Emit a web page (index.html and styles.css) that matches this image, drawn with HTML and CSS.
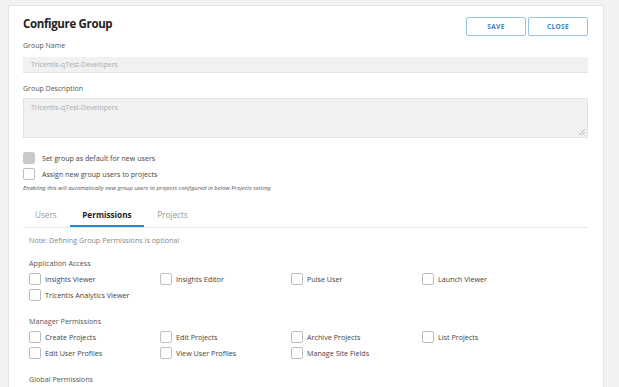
FILE: index.html
```html
<!DOCTYPE html>
<html>
<head>
<meta charset="utf-8">
<link rel="stylesheet" href="styles.css">
</head>
<body>
<div class="panel">
  <div class="header">
    <h1 class="title">Configure Group</h1>
    <div class="actions">
      <button class="btn">SAVE</button>
      <button class="btn">CLOSE</button>
    </div>
  </div>
  <div class="label">Group Name</div>
  <div class="input">Tricentis-qTest-Developers</div>
  <div class="label label-desc">Group Description</div>
  <div class="textarea">Tricentis-qTest-Developers
    <svg class="grip" width="8" height="8" viewBox="0 0 8 8"><path d="M7 1L1 7M7 4L4 7M7 6.5L6.5 7" stroke="#aaa" stroke-width="0.8"/></svg>
  </div>
  <div class="checks">
    <div class="check-row"><span class="cb cb-disabled"></span><span>Set group as default for new users</span></div>
    <div class="check-row"><span class="cb"></span><span>Assign new group users to projects</span></div>
    <div class="hint">Enabling this will automatically new group users to projects configured in below Projects setting</div>
  </div>
  <div class="tabs">
    <div class="tab">Users</div>
    <div class="tab active">Permissions</div>
    <div class="tab">Projects</div>
  </div>
  <div class="note">Note: Defining Group Permissions is optional</div>

  <div class="section-title first">Application Access</div>
  <div class="grid">
    <div class="item"><span class="cb"></span>Insights Viewer</div>
    <div class="item"><span class="cb"></span>Insights Editor</div>
    <div class="item"><span class="cb"></span>Pulse User</div>
    <div class="item"><span class="cb"></span>Launch Viewer</div>
    <div class="item"><span class="cb"></span>Tricentis Analytics Viewer</div>
  </div>

  <div class="section-title">Manager Permissions</div>
  <div class="grid">
    <div class="item"><span class="cb"></span>Create Projects</div>
    <div class="item"><span class="cb"></span>Edit Projects</div>
    <div class="item"><span class="cb"></span>Archive Projects</div>
    <div class="item"><span class="cb"></span>List Projects</div>
    <div class="item"><span class="cb"></span>Edit User Profiles</div>
    <div class="item"><span class="cb"></span>View User Profiles</div>
    <div class="item"><span class="cb"></span>Manage Site Fields</div>
  </div>

  <div class="section-title">Global Permissions</div>
</div>
</body>
</html>
```
FILE: styles.css
```css
html, body {
  margin: 0;
  padding: 0;
  background: #f2f2f2;
  height: 387px;
  overflow: hidden;
}
body {
  font-family: "Open Sans", "Noto Sans", sans-serif;
  color: #444;
  padding: 5px 0 0 8px;
}
.panel {
  width: 565px;
  background: #fff;
  border: 1px solid #e4e4e4;
  padding: 11px 15px 20px 14px;
  min-height: 400px;
}
.header {
  display: flex;
  justify-content: space-between;
  align-items: flex-start;
}
.title {
  margin: 0;
  font-size: 11.5px;
  font-weight: 700;
  letter-spacing: -0.35px;
  color: #222;
  line-height: 14px;
  padding-top: 0;
}
.actions {
  display: flex;
  gap: 2px;
}
.btn {
  width: 60px;
  height: 19px;
  background: #fff;
  border: 1px solid #95c4e8;
  border-radius: 2px;
  color: #3a84c4;
  font-family: "Open Sans", sans-serif;
  font-weight: 700;
  font-size: 6.5px;
  letter-spacing: 0.4px;
  padding: 0;
}
.label {
  font-size: 7px;
  color: #555;
  margin-top: 5px;
  line-height: 10px;
}
.label-desc {
  margin-top: 11px;
}
.input {
  margin-top: 6px;
  height: 15px;
  background: #f1f1f1;
  border-bottom: 1px solid #e2e2e2;
  font-size: 7px;
  color: #aaa;
  line-height: 15px;
  padding-left: 8px;
}
.textarea {
  position: relative;
  margin-top: 4px;
  height: 40px;
  background: #f1f1f1;
  border: 1px solid #e2e2e2;
  font-size: 7px;
  color: #aaa;
  padding: 4px 7px;
  box-sizing: border-box;
}
.grip {
  position: absolute;
  right: 1px;
  bottom: 1px;
}
.checks {
  margin-top: 14px;
}
.check-row {
  display: flex;
  align-items: center;
  gap: 7px;
  font-size: 7.1px;
  color: #444;
  height: 11px;
  margin-bottom: 5px;
}
.cb {
  display: inline-block;
  width: 10px;
  height: 10px;
  border: 1px solid #bdbdbd;
  border-radius: 2px;
  background: #fff;
  flex: none;
}
.cb-disabled {
  background: #c9c9c9;
  border-color: #c9c9c9;
}
.hint {
  font-size: 5.9px;
  font-style: italic;
  color: #555;
  margin-top: 0;
}
.tabs {
  display: flex;
  margin-top: 14px;
  border-bottom: 1px solid #e6e6e6;
  height: 21px;
}
.tab {
  font-size: 8.2px;
  color: #999;
  padding: 0 12px;
  line-height: 17px;
  margin-right: 1px;
}
.tab.active {
  color: #222;
  font-weight: 700;
  border-bottom: 2px solid #2a86cf;
  height: 19px;
  padding: 0 12.5px;
}
.note {
  font-size: 7.2px;
  color: #888;
  margin-top: 7px;
  padding-left: 6px;
}
.section-title {
  font-size: 7.2px;
  color: #555;
  margin-top: 16px;
  padding-left: 6px;
}
.section-title.first {
  margin-top: 13px;
}
.grid {
  display: grid;
  grid-template-columns: 131px 131px 131px 131px;
  row-gap: 5px;
  padding-left: 6px;
  margin-top: 5px;
}
.item {
  display: flex;
  align-items: center;
  gap: 4px;
  font-size: 7.2px;
  color: #444;
  height: 11px;
}
```
